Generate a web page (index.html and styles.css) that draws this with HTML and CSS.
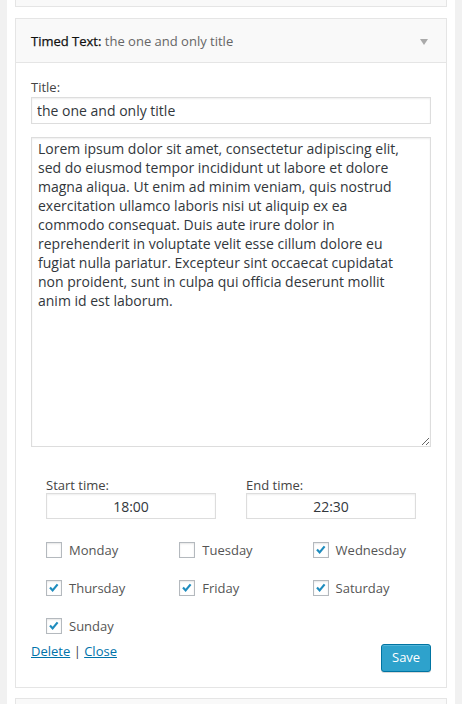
FILE: index.html
```html
<!DOCTYPE html>
<html>
<head>
<meta charset="utf-8">
<link rel="stylesheet" href="styles.css">
</head>
<body>
<div class="sidebar">
  <div class="widget-stub top"></div>
  <div class="widget">
    <div class="widget-top">
      <span class="widget-title"><strong>Timed Text:</strong> <span class="in-title">the one and only title</span></span>
      <span class="arrow"></span>
    </div>
    <div class="widget-inside">
      <p class="field">
        <label class="lbl">Title:</label>
        <input class="text-input" type="text" value="the one and only title">
      </p>
      <textarea class="content">Lorem ipsum dolor sit amet, consectetur adipiscing elit, sed do eiusmod tempor incididunt ut labore et dolore magna aliqua. Ut enim ad minim veniam, quis nostrud exercitation ullamco laboris nisi ut aliquip ex ea commodo consequat. Duis aute irure dolor in reprehenderit in voluptate velit esse cillum dolore eu fugiat nulla pariatur. Excepteur sint occaecat cupidatat non proident, sunt in culpa qui officia deserunt mollit anim id est laborum.</textarea>
      <div class="times">
        <div class="time">
          <label class="lbl">Start time:</label>
          <input class="time-input" type="text" value="18:00">
        </div>
        <div class="time">
          <label class="lbl">End time:</label>
          <input class="time-input" type="text" value="22:30">
        </div>
      </div>
      <div class="days">
        <label class="day"><span class="cb"></span>Monday</label>
        <label class="day"><span class="cb"></span>Tuesday</label>
        <label class="day"><span class="cb"><svg viewBox="0 0 16 16" width="16" height="16"><path d="M4 7.6 L6.6 10.4 L11.6 4.4" fill="none" stroke="#1e8cbe" stroke-width="2.2"/></svg></span>Wednesday</label>
        <label class="day"><span class="cb"><svg viewBox="0 0 16 16" width="16" height="16"><path d="M4 7.6 L6.6 10.4 L11.6 4.4" fill="none" stroke="#1e8cbe" stroke-width="2.2"/></svg></span>Thursday</label>
        <label class="day"><span class="cb"><svg viewBox="0 0 16 16" width="16" height="16"><path d="M4 7.6 L6.6 10.4 L11.6 4.4" fill="none" stroke="#1e8cbe" stroke-width="2.2"/></svg></span>Friday</label>
        <label class="day"><span class="cb"><svg viewBox="0 0 16 16" width="16" height="16"><path d="M4 7.6 L6.6 10.4 L11.6 4.4" fill="none" stroke="#1e8cbe" stroke-width="2.2"/></svg></span>Saturday</label>
        <label class="day"><span class="cb"><svg viewBox="0 0 16 16" width="16" height="16"><path d="M4 7.6 L6.6 10.4 L11.6 4.4" fill="none" stroke="#1e8cbe" stroke-width="2.2"/></svg></span>Sunday</label>
      </div>
      <div class="controls">
        <div class="links"><a href="#">Delete</a> | <a href="#">Close</a></div>
        <button class="save" type="button">Save</button>
      </div>
    </div>
  </div>
  <div class="widget-stub bottom"></div>
</div>
</body>
</html>
```

FILE: styles.css
```css
html, body {
  margin: 0;
  padding: 0;
  height: 100%;
}
body {
  background: #f1f1f1;
  font-family: "Open Sans", sans-serif;
  font-size: 13px;
  color: #444;
  overflow: hidden;
}
.sidebar {
  margin: 0 7px;
  padding: 0 8px;
  background: #fff;
  height: 100%;
}
.widget-stub {
  background: #f9f9f9;
  border: 1px solid #e5e5e5;
}
.widget-stub.top {
  height: 6px;
  border-top: none;
  margin-bottom: 11px;
}
.widget-stub.bottom {
  height: 20px;
  margin-top: 10px;
}
.widget {
  border: 1px solid #e5e5e5;
  background: #fff;
}
.widget-top {
  height: 43px;
  background: #f9f9f9;
  border-bottom: 1px solid #e5e5e5;
  display: flex;
  align-items: center;
  justify-content: space-between;
  padding: 0 15px;
}
.widget-title {
  font-size: 13px;
  color: #1d2327;
}
.widget-title strong {
  font-weight: normal;
  color: #111;
  -webkit-text-stroke: 0.25px #111;
}
.in-title {
  color: #666;
}
.arrow {
  width: 0;
  height: 0;
  border-left: 4px solid transparent;
  border-right: 4px solid transparent;
  border-top: 6px solid #aaa;
  margin-right: 3px;
  margin-top: 2px;
}
.widget-inside {
  padding: 15px 15px 15px;
}
.field {
  margin: 0;
}
.lbl {
  display: block;
  font-size: 13px;
  line-height: 18px;
  color: #444;
  margin-bottom: 1px;
}
.text-input, .time-input, .content {
  box-sizing: border-box;
  border: 1px solid #ddd;
  box-shadow: inset 0 1px 2px rgba(0,0,0,.07);
  background: #fff;
  color: #32373c;
  font-family: "Open Sans", sans-serif;
  font-size: 14px;
  outline: none;
  margin: 0;
}
.text-input {
  display: block;
  width: 100%;
  height: 27px;
  padding: 3px 5px;
}
.content {
  display: block;
  width: 100%;
  height: 310px;
  margin-top: 13px;
  padding: 1px 16px 1px 6px;
  line-height: 19px;
  resize: vertical;
}
.times {
  display: grid;
  grid-template-columns: 170px 170px;
  column-gap: 30px;
  padding: 0 15px;
  margin-top: 29px;
}
.time .lbl {
  margin-bottom: -1px;
}
.time-input {
  display: block;
  width: 100%;
  height: 26px;
  text-align: center;
  padding: 2px 5px;
}
.days {
  display: grid;
  grid-template-columns: repeat(3, 133.3px);
  grid-auto-rows: 38px;
  padding-left: 15px;
  margin-top: 12px;
}
.day {
  display: flex;
  align-items: center;
  font-size: 13px;
  color: #555;
}
.cb {
  box-sizing: border-box;
  width: 16px;
  height: 16px;
  border: 1px solid #b4b9be;
  background: #fff;
  box-shadow: inset 0 1px 2px rgba(0,0,0,.1);
  margin-right: 7px;
  position: relative;
}
.cb svg {
  position: absolute;
  left: -1px;
  top: -1px;
}
.controls {
  display: flex;
  justify-content: space-between;
  align-items: flex-start;
  margin-top: -3px;
}
.links {
  font-size: 13px;
  line-height: 18px;
  color: #444;
}
.links a {
  color: #0073aa;
  text-decoration: underline;
}
.save {
  font-family: "Open Sans", sans-serif;
  font-size: 13px;
  height: 28px;
  width: 50px;
  padding: 0 10px 2px;
  margin-top: 2px;
  background: #2ea2cc;
  border: 1px solid #0074a2;
  border-radius: 3px;
  color: #fff;
  box-shadow: inset 0 1px 0 rgba(120,200,230,.5), 0 1px 0 rgba(0,0,0,.15);
}
```
